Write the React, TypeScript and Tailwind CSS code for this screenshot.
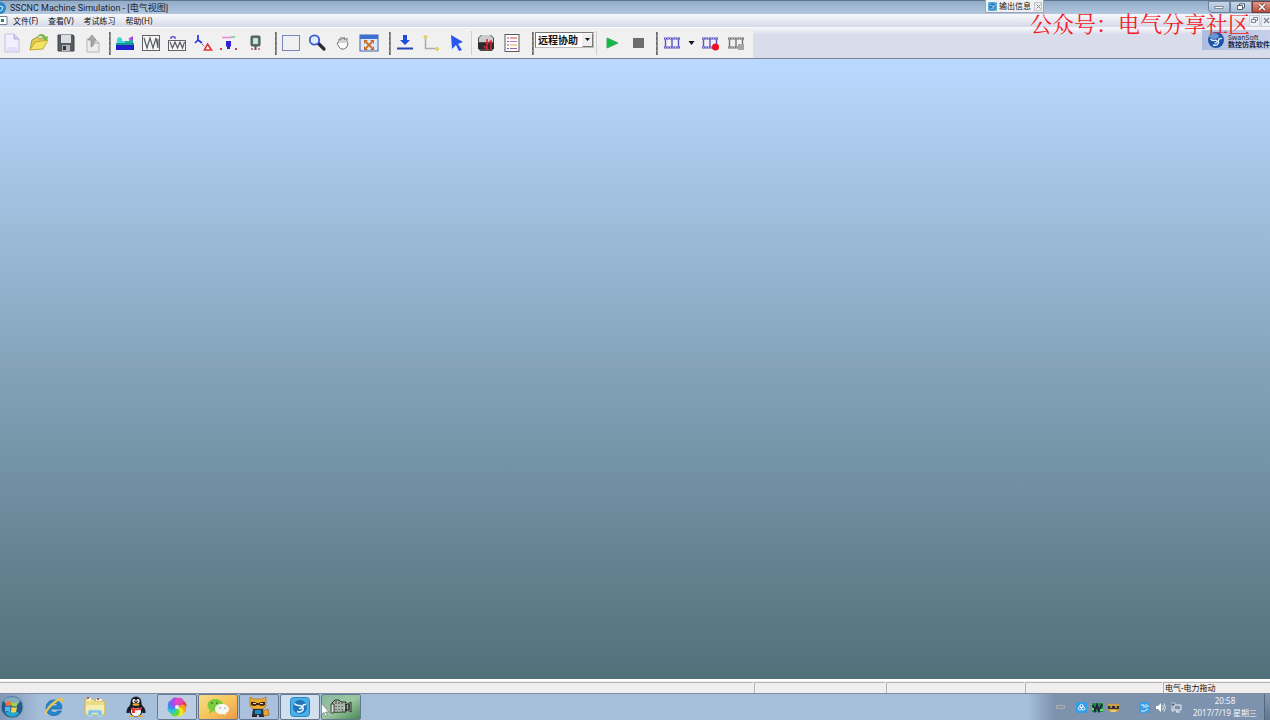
import type { ReactNode } from "react";

const uiFont = "font-['Noto_Sans','Noto_Sans_CJK_SC',sans-serif]";

function Svg({ w = 20, h = 20, children }: { w?: number; h?: number; children: ReactNode }) {
  return (
    <svg width={w} height={h} viewBox={`0 0 ${w} ${h}`} fill="none" aria-hidden="true" className="shrink-0">
      {children}
    </svg>
  );
}

function Tool({ label, wide, children }: { label: string; wide?: boolean; children: ReactNode }) {
  return (
    <button
      type="button"
      aria-label={label}
      className={`flex h-7 shrink-0 items-center justify-center ${wide ? "w-[27px]" : "w-[26px]"}`}
    >
      {children}
    </button>
  );
}

function Grip({ tight }: { tight?: boolean }) {
  return (
    <div
      className={`mr-px h-[23px] w-0.5 shrink-0 border-l border-dashed border-[#666] bg-[#8c8c8c] ${tight ? "ml-[3px]" : "ml-[7px]"}`}
    />
  );
}

function Divider() {
  return <div className="mx-px h-6 w-px shrink-0 bg-[#cfcfd2]" />;
}

function SwanMark({ size }: { size: number }) {
  return (
    <svg width={size} height={size} viewBox="0 0 20 20" aria-hidden="true" className="shrink-0">
      <rect x="0.5" y="0.5" width="19" height="19" rx="3" fill="#4bb0e4" stroke="#2b86c0" />
      <circle cx="10" cy="10" r="7" fill="#2275b8" />
      <path d="M4.500 6.500C7 10 10 7.500 11.500 9s-.5 2.500-2.500 2.500" fill="none" stroke="#e6f6ff" strokeWidth="1.500" />
      <path d="M7 14.500c4 1.500 7-1 6-4-.5-2 0-3.500 3-3" fill="none" stroke="#e6f6ff" strokeWidth="1.500" />
    </svg>
  );
}

function Film({ color, children }: { color: string; children?: ReactNode }) {
  return (
    <Svg w={18} h={16}>
      <path d="M1 3.500h16M1 12.500h16" stroke={color} strokeWidth="2" />
      <path d="M2.500 3v10M9 3v10M15.500 3v10" stroke={color} strokeWidth="1.400" />
      <path d="M2 3.500h15M2 12.500h15" stroke="#dcdcf2" strokeWidth="0.800" strokeDasharray="1 1.500" />
      {children}
    </Svg>
  );
}

function TitleBar() {
  return (
    <header className="flex h-[14px] shrink-0 items-center border-t border-[#60768e] bg-linear-to-b from-[#91abc9] to-[#b4c8df]">
      <svg width="8" height="12" viewBox="0 0 8 12" aria-hidden="true">
        <circle cx="0" cy="6" r="6" fill="#2789ca" />
        <path d="M0 4l3 1-1 3-2 1" stroke="#d9f3ff" fill="none" />
      </svg>
      <h1 className="ml-[2px] font-[Roboto,'Noto_Sans_CJK_SC',sans-serif] text-[9px] leading-3 whitespace-nowrap text-[#18222e]">SSCNC Machine Simulation - [电气视图]</h1>
      <div className="ml-auto flex h-3 shrink-0 self-start">
        <button type="button" aria-label="最小化" className="flex w-[22px] items-center justify-center rounded-bl-sm border border-[#71869e] bg-linear-to-b from-[#c6d5e6] to-[#a5bbd3]">
          <Svg w={10} h={8}><rect x="1" y="3.5" width="8" height="2" fill="#fff" stroke="#58677a" strokeWidth="0.7" /></Svg>
        </button>
        <button type="button" aria-label="还原" className="flex w-[22px] items-center justify-center border border-[#71869e] bg-linear-to-b from-[#c6d5e6] to-[#a5bbd3]">
          <Svg w={10} h={8}><path d="M3.5 2V.8h5v4H7M1.5 2.5h5v4h-5z" fill="#fff" stroke="#505e70" /></Svg>
        </button>
        <button type="button" aria-label="关闭" className="flex w-[18px] items-center justify-center border border-r-0 border-[#703d3b] bg-linear-to-b from-[#dc9a8b] to-[#bd4936]">
          <Svg w={10} h={8}><path d="M2 1l6 6M8 1L2 7" stroke="#6b3830" strokeWidth="3" /><path d="M2 1l6 6M8 1L2 7" stroke="#fff" strokeWidth="1.7" /></Svg>
        </button>
      </div>
    </header>
  );
}

function MenuBar() {
  return (
    <nav className="flex h-[13px] shrink-0 items-center bg-linear-to-b from-[#f8f9fc] to-[#d5d9e9] text-[8px] leading-3 whitespace-nowrap text-[#111]">
      <svg width="8" height="9" viewBox="0 0 8 9" aria-hidden="true">
        <path d="M-1 .5h8v8h-8z" fill="#fff" stroke="#787f88" />
        <rect x="1" y="3" width="3" height="3" fill="#2b9068" />
      </svg>
      <div className="ml-[5px] flex gap-[10px]">
        <button type="button">文件(F)</button>
        <button type="button">查看(V)</button>
        <button type="button">考试练习</button>
        <button type="button">帮助(H)</button>
      </div>
      <div className="ml-auto flex">
        <button type="button" aria-label="还原子窗口" className="flex h-3 w-[11px] items-center justify-center border border-[#c4cedc] bg-[#edf1f8]">
          <Svg w={7} h={7}><path d="M2.5 2V.5h4v3H5M.5 2.5h4v3h-4z" stroke="#7b8798" /></Svg>
        </button>
        <button type="button" aria-label="关闭子窗口" className="ml-px flex h-3 w-[9px] items-center justify-center border border-r-0 border-[#c4cedc] bg-[#edf1f8]">
          <Svg w={7} h={7}><path d="M1 1l5 5M6 1L1 6" stroke="#7b8798" strokeWidth="1.3" /></Svg>
        </button>
      </div>
    </nav>
  );
}

function ToolBar() {
  return (
    <div className="flex h-8 shrink-0 border-b border-[#7c838e] bg-linear-to-b from-[#fafafd] via-[#d9dcea] via-25% to-[#d9dcea]">
      <div role="toolbar" className="flex items-center border-t border-[#fff] bg-[#f0f0f1] pr-1">
        <div className="-ml-0.5 flex">
          <Tool wide label="新建">
            <Svg><path d="M3 1h9l5 5v13H3z" fill="#f2f0ff" stroke="#c4c1df" /><path d="M12 1v5h5" fill="#d4ccf2" stroke="#b3add7" /><path d="M5 14h10v4H5z" fill="#e4defb" /></Svg>
          </Tool>
          <Tool wide label="打开">
            <Svg><path d="M1 17L3 7l5-3 3 2 5-2v4" fill="#e3ce55" stroke="#a19b3c" /><path d="M1 17L6 9l13-2-5 9z" fill="#f4e35f" stroke="#c5a93c" /><path d="M8 4c2-4 7-4 9 0l2-1-1 5-4-2 1-1c-2-2-4-2-7-1z" fill="#77b844" /></Svg>
          </Tool>
          <Tool wide label="保存">
            <Svg><path d="M2 2h15l1 1v15H2z" fill="#555b61" stroke="#3f4348" /><rect x="5" y="2" width="10" height="8" fill="#dadde1" /><rect x="6" y="12" width="8" height="6" fill="#b6babd" /><rect x="7" y="13" width="3" height="4" fill="#30343a" /></Svg>
          </Tool>
          <Tool wide label="导出">
            <Svg><path d="M4 6h8l4 4v9H4z" fill="#ececec" stroke="#b5b5b5" /><path d="M12 6v4h4" stroke="#aaa" /><path d="M8 14V7H5l4-5 4 5h-2c0 4 0 6-3 7z" fill="#a8a8a8" stroke="#888" strokeWidth="0.7" /></Svg>
          </Tool>
        </div>
        <Grip tight />
        <Tool label="机床">
          <Svg><path d="M1 11h18v6H1z" fill="#2222cc" /><path d="M1 10h18v2H1z" fill="#159a92" /><path d="M2 10V6l2-2 3 1v3h3v2z" fill="#3adbd8" /><path d="M10 10V8h4l1-3 3-1v6z" fill="#28a7a8" /><path d="M13 6l5-3v4z" fill="#b83bdc" /></Svg>
        </Tool>
        <Tool label="波形">
          <Svg><rect x="1.5" y="2.5" width="17" height="15" fill="#f5f5f5" stroke="#5f6267" /><path d="M3 5l3 10 3-10 3 10 3-10 2 10V6" stroke="#565a5e" strokeWidth="1.2" /></Svg>
        </Tool>
        <Tool label="信号">
          <Svg><rect x="1.5" y="7.5" width="17" height="10" fill="#f5f5f5" stroke="#5f6267" /><path d="M3 9l2.500 6L8 9l2.500 6L13 9l2.500 6L17.500 9" stroke="#55595e" strokeWidth="1.2" /><path d="M4 6V4h4v2M6 4V3" stroke="#413cc2" strokeWidth="1.200" /></Svg>
        </Tool>
        <Tool label="星三角">
          <Svg><path d="M5 2v5M5 7l-3 3M5 7l4 3" stroke="#2934e0" strokeWidth="1.7" /><path d="M9 11l3 3" stroke="#333" strokeDasharray="1 1" /><path d="M14.500 11l4 6h-7z" stroke="#e13238" strokeWidth="1.6" /></Svg>
        </Tool>
        <Tool label="刀具">
          <Svg><path d="M3 4.500h9" stroke="#ea8adc" strokeWidth="1.500" /><path d="M12 4h4" stroke="#62cf84" strokeWidth="1.5" /><path d="M7 8h5v5l-1 1v2H8v-2l-1-1z" fill="#2d21d2" /><path d="M1 16h2M16 16h2" stroke="#c4404c" strokeWidth="2" /></Svg>
        </Tool>
        <Tool label="主轴">
          <Svg><rect x="6" y="3" width="9" height="10" rx="1" fill="#5f706d" stroke="#4b5653" /><rect x="8" y="5" width="5" height="6" rx="1" fill="#c9e8d5" /><path d="M10.500 13v4" stroke="#555" strokeWidth="2" /><path d="M6 16h2M13 16h2" stroke="#ca75b9" strokeWidth="2" /></Svg>
        </Tool>
        <Grip />
        <Tool label="选择区域">
          <Svg><rect x="1.500" y="2.500" width="17" height="15" stroke="#a9b2da" /><rect x="1.500" y="2.500" width="17" height="15" stroke="#4a56a4" strokeDasharray="1 1" /></Svg>
        </Tool>
        <Tool label="缩放">
          <Svg><path d="M11 10l6 6" stroke="#302838" strokeWidth="3.2" strokeLinecap="round" /><circle cx="7.5" cy="7" r="4.7" fill="#d9f0ff" stroke="#4058d0" strokeWidth="1.8" /></Svg>
        </Tool>
        <Tool label="平移">
          <Svg><path d="M6 14L4 10l2-1V6l2 1V4l2 2 1-2 1 3 2-2v4l1 1-1 4-3 2H8z" fill="#fafafa" stroke="#777" /><path d="M8 7v3M10 6v4M12 7v3" stroke="#888" strokeWidth="0.7" /></Svg>
        </Tool>
        <Tool label="适应窗口">
          <Svg><rect x="1" y="2" width="18" height="16" fill="#dde8fb" stroke="#4662aa" /><path d="M1 2h18v4H1z" fill="#3f6fd0" /><path d="M7 9l6 6M13 9l-6 6" stroke="#cf7430" strokeWidth="2" /><path d="M5 7h4l-4 4zM15 7h-4l4 4zM5 17h4l-4-4zM15 17h-4l4-4z" fill="#c8692a" /></Svg>
        </Tool>
        <Grip />
        <Tool label="下载">
          <Svg><path d="M8 2h4v5h3l-5 5-5-5h3z" fill="#1f4ddd" /><path d="M2 15.500h16" stroke="#2446b7" strokeWidth="2" /></Svg>
        </Tool>
        <Tool label="坐标轴">
          <Svg><path d="M4.500 3v12.500H17" stroke="#aaa6b4" strokeWidth="1.500" /><path d="M2.500 4h4M4.500 2v4M16 14v4M14 16h4" stroke="#e4d260" strokeWidth="2" /></Svg>
        </Tool>
        <Tool label="指针">
          <Svg><path d="M4 2l12 7-5 2 4 6-3 1-3-6-4 4z" fill="#2856f1" /></Svg>
        </Tool>
        <Divider />
        <Tool label="电气元件">
          <Svg><path d="M2 5l3-3h10l3 3v10l-2 3H4l-2-3z" fill="#4b4e50" /><path d="M3 5l3-3h8l3 3v4H3z" fill="#cbcdcd" /><path d="M2 10h16v6H2z" fill="#2b2b2c" /><path d="M11 6v12M11 11l4-3v9M8 13l3 3" stroke="#dc2630" strokeWidth="1.500" /></Svg>
        </Tool>
        <Tool label="列表">
          <Svg><rect x="3" y="1.500" width="14" height="17" fill="#fffdf4" stroke="#5c5866" /><path d="M5 5h2M5 8.500h2M5 12h2M5 15.500h2" stroke="#6661b0" /><path d="M8 5h7" stroke="#cb4b43" /><path d="M8 8.500h7" stroke="#b37dd1" /><path d="M8 12h7" stroke="#e0a060" /><path d="M8 15.500h7" stroke="#8d6ab0" /></Svg>
        </Tool>
        <Grip />
        <div className="relative -mt-[7px] shrink-0">
          <select
            aria-label="模式"
            defaultValue="remote"
            className="block h-4 w-[59px] appearance-none border border-t-[#777] border-r-[#bbb] border-b-[#bbb] border-l-[#777] bg-[#fff] pl-0.5 font-['Noto_Sans_CJK_SC',sans-serif] text-[10px] leading-[14px] font-bold text-[#111]"
          >
            <option value="remote">远程协助</option>
          </select>
          <span className="pointer-events-none absolute top-px right-px flex h-[14px] w-[11px] items-center justify-center border border-t-[#fff] border-r-[#777] border-b-[#777] border-l-[#eee] bg-[#eee]">
            <Svg w={5} h={3}><path d="M0 0h5L2.500 3z" fill="#111" /></Svg>
          </span>
        </div>
        <div className="mx-0.5 h-6 w-px shrink-0 bg-[#d0d0d3]" />
        <Tool label="运行">
          <Svg><path d="M5 5l11 5-11 5z" fill="#16b749" stroke="#3aa75b" /></Svg>
        </Tool>
        <Tool label="停止">
          <Svg><rect x="5" y="5" width="11" height="10" fill="#6c6c6c" /></Svg>
        </Tool>
        <div className="ml-0.5 flex items-center">
          <Grip tight />
          <Tool label="录像"><Film color="#5a55c4" /></Tool>
          <button type="button" aria-label="录像选项" className="flex h-7 w-3 items-center justify-center">
            <Svg w={7} h={4}><path d="M.5 0h6L3.500 4z" fill="#111" /></Svg>
          </button>
          <Tool label="开始录像"><Film color="#5a55c4"><circle cx="14.500" cy="12" r="3.500" fill="#ee1021" /></Film></Tool>
          <Tool label="停止录像"><Film color="#737373"><rect x="11" y="9" width="6" height="6" fill="#a5a5a5" /></Film></Tool>
        </div>
      </div>
      <div className="mt-[3px] ml-auto flex h-5 w-[68px] shrink-0 items-center gap-[3px] overflow-hidden bg-linear-to-r from-[#aebde0] to-[#c6d0e8] pl-[5px]">
        <svg width="18" height="18" viewBox="0 0 18 18" aria-hidden="true" className="shrink-0">
          <circle cx="9" cy="9" r="8" fill="#1c53a6" />
          <ellipse cx="7" cy="5" rx="5" ry="3" fill="#6696d4" />
          <path d="M3.500 8C6 11 8 8.500 9.500 9.500s0 2.500-2 2.500" stroke="#e2f1ff" strokeWidth="1.400" fill="none" />
          <path d="M6 14c4 1 6-1 5.500-4-.3-2 1-3 3.500-2.500" stroke="#e2f1ff" strokeWidth="1.400" fill="none" />
        </svg>
        <div className="pt-0.5 text-[7px] leading-[7px] whitespace-nowrap text-[#1d2740]">
          <div>SwanSoft</div>
          <div className="font-bold">数控仿真软件</div>
        </div>
      </div>
    </div>
  );
}

function StatusBar() {
  const pane = "shrink-0 border-t border-l border-[#b5b5b5] mr-px";
  return (
    <footer className="flex h-[14px] shrink-0 border-t-2 border-[#fff] bg-[#f0efee] pt-px text-[8px] leading-[10px] whitespace-nowrap text-[#111]">
      <div className="mr-px flex-1 border-t border-[#b5b5b5]" />
      <div className={`${pane} w-[131px]`} />
      <div className={`${pane} w-[138px]`} />
      <div className={`${pane} w-[137px]`} />
      <div className="w-[107px] shrink-0 border-t border-l border-[#b5b5b5] pl-px">电气-电力拖动</div>
    </footer>
  );
}

function TaskItem({ label, look, children }: { label: string; look?: string; children: ReactNode }) {
  return (
    <button
      type="button"
      aria-label={label}
      className={`flex h-[26px] w-10 shrink-0 items-center justify-center ${look ? `rounded-xs border border-[#66788f] ${look}` : ""}`}
    >
      {children}
    </button>
  );
}

const petals = ["#e93b37", "#f6a01f", "#f3e51e", "#64d83b", "#27c5cf", "#4e7ef0", "#a84cf0", "#e646bc"];

function TaskBar() {
  return (
    <div className="flex h-[27px] shrink-0 items-center border-t border-[#7e8ba4] bg-linear-to-r from-[#8298b6] to-[#a6bfdb] to-[42px]">
      <div className="-ml-[7px] flex shrink-0 gap-px">
        <TaskItem label="开始">
          <Svg w={24} h={24}>
            <circle cx="11" cy="12" r="11" fill="#235c8c" stroke="#7193ac" /><ellipse cx="11" cy="6" rx="8" ry="4" fill="#83a9bf" /><path d="M4 18c4 5 11 5 14 0-4-3-10-3-14 0z" fill="#25a6cf" />
            <path d="M5 7q3-2 5 0l-.5 4q-3-1-5 0z" fill="#f27638" /><path d="M11 7q3 2 6 0l-1 4q-3 1-5.500 0z" fill="#a2cf4c" /><path d="M4 12q3-1 5.500 0L9 17q-3-2-5 0z" fill="#54b4ef" /><path d="M10.500 12q3 1 5.500 0l-1 5q-3 1-5 0z" fill="#fcd14a" />
          </Svg>
        </TaskItem>
        <TaskItem label="Internet Explorer">
          <Svg w={22} h={22}>
            <path d="M18.500 13H7.500c.4 4 5 4.500 7 2h4C15 22 3 21 3 12S15 1 18.500 9c.4 1 .5 2 0 4zM7.500 10h7c0-4-7-4-7 0z" fill="#2387cf" stroke="#1266a8" strokeWidth="0.7" />
            <path d="M3 20C-2 17 10 3 18 2c3 0 2 3 1 5 0-3-2-3-5-1C8 10 3 16 3 20z" fill="#ecc743" />
          </Svg>
        </TaskItem>
        <TaskItem label="资源管理器">
          <Svg w={22} h={22}>
            <path d="M1 3h8l2 2h10v14H1z" fill="#ebdc87" stroke="#c8b965" /><path d="M3 2h4v3H3zM12 3h6v2h-6z" fill="#f9f6dd" /><path d="M3 2h2M13 3h2" stroke="#cc5243" strokeWidth="2" /><path d="M2 9h18v9H2z" fill="#f8edae" /><path d="M4 20v-4q0-2 2-2h10q2 0 2 2v4h-4v-3H8v3z" fill="#81bee2" stroke="#b6dff2" />
          </Svg>
        </TaskItem>
        <TaskItem label="QQ">
          <Svg w={20} h={22}>
            <ellipse cx="10" cy="13" rx="7" ry="8" fill="#181a25" /><path d="M2 17q0-6 4-6M18 17q0-6-4-6" stroke="#161a24" strokeWidth="3" /><ellipse cx="10" cy="15.500" rx="5" ry="5" fill="#f8f8f8" /><ellipse cx="10" cy="6.500" rx="5.500" ry="6" fill="#181a25" /><ellipse cx="8" cy="5" rx="1.600" ry="2" fill="#fff" /><ellipse cx="12" cy="5" rx="1.600" ry="2" fill="#fff" /><circle cx="8.500" cy="5.300" r=".6" fill="#111" /><circle cx="11.500" cy="5.300" r=".6" fill="#111" /><ellipse cx="10" cy="8.500" rx="3.500" ry="1.300" fill="#f3a929" /><path d="M4 11q6 3 12 0v2q-3 2-7 1v3H6v-4z" fill="#e43731" /><path d="M3 20q3-2 6 1H3zM11 21q3-3 6-1v1z" fill="#eeac2b" />
          </Svg>
        </TaskItem>
        <TaskItem label="浏览器" look="bg-[#bccde2]">
          <svg width="22" height="22" viewBox="0 0 22 22" aria-hidden="true">
            {petals.map((color, i) => (
              <path key={color} d="M11 11C11 6 15 2 19 6c2 2 2 5 0 6-3 1-6 1-8-1z" fill={color} transform={`rotate(${i * 45} 11 11)`} />
            ))}
            <circle cx="11" cy="11" r="2" fill="#e9eef6" />
          </svg>
        </TaskItem>
        <TaskItem label="微信" look="bg-linear-to-br from-[#f6dd8a] via-[#f6c65c] to-[#ed984c]">
          <Svg w={24} h={20}>
            <path d="M3 17l1-4C-2 7 4 2 9 2s9 3 8 7-6 6-10 5z" fill="#79cc3d" /><path d="M20 18l-2-1c-4 1-9-1-9-5s4-5 7-5 7 2 7 5c0 2-1 3-3 4z" fill="#f8f8f2" /><circle cx="6" cy="6" r="1" fill="#477f26" /><circle cx="11" cy="6" r="1" fill="#477f26" /><circle cx="14" cy="11" r=".8" fill="#989898" /><circle cx="19" cy="11" r=".8" fill="#989898" />
          </Svg>
        </TaskItem>
        <TaskItem label="助手" look="bg-[#abc0dc]">
          <Svg w={22} h={22}>
            <path d="M2 1l4 2h8l4-2v9l-3 3H5l-3-3z" fill="#eeae2d" stroke="#a66f19" strokeWidth="0.7" />
            <path d="M3 6q3-1 6 1h2q3-2 6-1v3q-3 2-6 0H9q-3 2-6 0z" fill="#3a2725" />
            <path d="M5 7.500h3M12 7.500h3" stroke="#f2d28b" strokeWidth="1.200" />
            <path d="M5 13h10l1 6H4z" fill="#1c3550" /><path d="M7 14h6v4H7z" fill="#2688b8" />
            <path d="M4 19h5v2H4zM11 19h5v2h-5z" fill="#33261f" />
            <path d="M15 15l5-2 1 6-5 1z" fill="#eda431" stroke="#9b5a1a" strokeWidth="0.700" />
          </Svg>
        </TaskItem>
        <TaskItem label="SSCNC Machine Simulation" look="bg-[#d2dfef]">
          <SwanMark size={20} />
        </TaskItem>
        <div className="relative">
          <TaskItem label="屏幕录像" look="bg-linear-to-br from-[#88b6a0] via-[#9bc8a1] to-[#468954]">
            <Svg w={24} h={20}>
              <path d="M3 6l3-3h4l2 2h5v3l5-3v10l-5-3v3H4z" fill="#a9b5a9" stroke="#273129" /><path d="M2 7h3v9H2zM7 4v12M10 5v11M13 6v9" stroke="#394239" fill="#ddd" /><path d="M6 8h8M6 11h10M6 14h7" stroke="#e6ece6" strokeDasharray="2 1" /><path d="M17 7v7M20 7v6" stroke="#222" strokeWidth="1.500" />
            </Svg>
          </TaskItem>
          <svg width="9" height="14" viewBox="0 0 9 14" aria-hidden="true" className="absolute top-[9px] left-0">
            <path d="M.5.5v11l2.500-2 1.500 4 2-1-2-3.500H8z" fill="#fff" stroke="#777" strokeWidth="0.700" />
          </svg>
        </div>
      </div>
      <div className="ml-auto flex h-full shrink-0 items-center bg-linear-to-r from-[#a6bfdb] to-[#7d92ad] to-[28px] pl-[29px]">
        <div className="flex items-center">
          <div className="h-1 w-[9px] border border-[#a9adb5] bg-[#8b95a3]" />
          <div className="ml-[11px] flex gap-[5px]">
            <Svg w={11} h={11}><rect width="11" height="11" rx="2" fill="#309fe9" /><circle cx="3.800" cy="6.500" r="1.600" stroke="#f2faff" /><circle cx="7.200" cy="6.500" r="1.600" stroke="#f2faff" /><circle cx="5.500" cy="4" r="1.600" stroke="#f2faff" /></Svg>
            <Svg w={11} h={11}><path d="M0 1h11v9H0z" fill="#278b45" /><path d="M1 3l2 6 2-6 2 6 3-7" stroke="#251a48" strokeWidth="1.800" /><path d="M0 7h2M8 8h3" stroke="#5de36a" strokeWidth="2" /></Svg>
            <Svg w={11} h={11}><path d="M0 1l2 1h7l2-1v7l-2 2H2L0 8z" fill="#cda045" /><path d="M0 4h11v3H0z" fill="#392d22" /><path d="M2 5h2M7 5h2M3 9h5" stroke="#fff2c5" /></Svg>
          </div>
          <div className="ml-5 flex gap-[5px]">
            <Svg w={11} h={11}><rect width="11" height="11" rx="1" fill="#3d9ce2" /><path d="M2 3h3v3M7 2v4M8 4h2M2 9q4 1 7-2" stroke="#e8f8ff" /></Svg>
            <Svg w={11} h={11}><path d="M1 4h2l3-3v9L3 7H1z" fill="#fff" /><path d="M7.500 3q2 2.500 0 5M9 1.500q3 4 0 8" stroke="#e1e8f0" /></Svg>
            <Svg w={11} h={11}><path d="M3 3h7v5H3zM5 10h4M6 8v2" stroke="#eef1f5" /><path d="M0 1h4v3H0z" fill="#546373" stroke="#eee" strokeWidth="0.700" /><path d="M1 5v4h2" stroke="#eee" /></Svg>
          </div>
        </div>
        <div className="ml-2 w-[70px] text-center text-[8px] leading-3 whitespace-nowrap text-[#f2f6fb]">
          <div>20:58</div>
          <div>2017/7/19 星期三</div>
        </div>
        <button type="button" aria-label="显示桌面" className="ml-1 h-full w-1.5 border-l border-[#51667f] bg-linear-to-b from-[#8799ae] to-[#607791]" />
      </div>
    </div>
  );
}

export default function App() {
  return (
    <div className={`relative flex h-screen flex-col overflow-hidden ${uiFont}`}>
      <TitleBar />
      <MenuBar />
      <ToolBar />
      <main className="flex-1 bg-linear-to-b from-[#bbd9ff] to-[#50707a]" />
      <StatusBar />
      <TaskBar />
      <div className="absolute top-0 right-[226px] flex h-[13px] w-[59px] items-center border border-t-0 border-[#9aa6b5] bg-[#eff0f2] pl-0.5 text-[8px] leading-3 whitespace-nowrap text-[#111]">
        <SwanMark size={9} />
        <span className="ml-[2px]">输出信息</span>
        <button type="button" aria-label="关闭输出信息" className="mr-px ml-auto flex h-[9px] w-2 items-center justify-center border border-[#c4c4c8]">
          <Svg w={5} h={5}><path d="M.5.5l4 4M4.500.5l-4 4" stroke="#888" /></Svg>
        </button>
      </div>
      <p className="pointer-events-none absolute top-[13px] right-[20px] font-['Noto_Serif_CJK_SC','Noto_Sans_CJK_SC',serif] text-[22px] leading-5 whitespace-nowrap text-[#f51a22]">
        公众号：电气分享社区
      </p>
    </div>
  );
}
